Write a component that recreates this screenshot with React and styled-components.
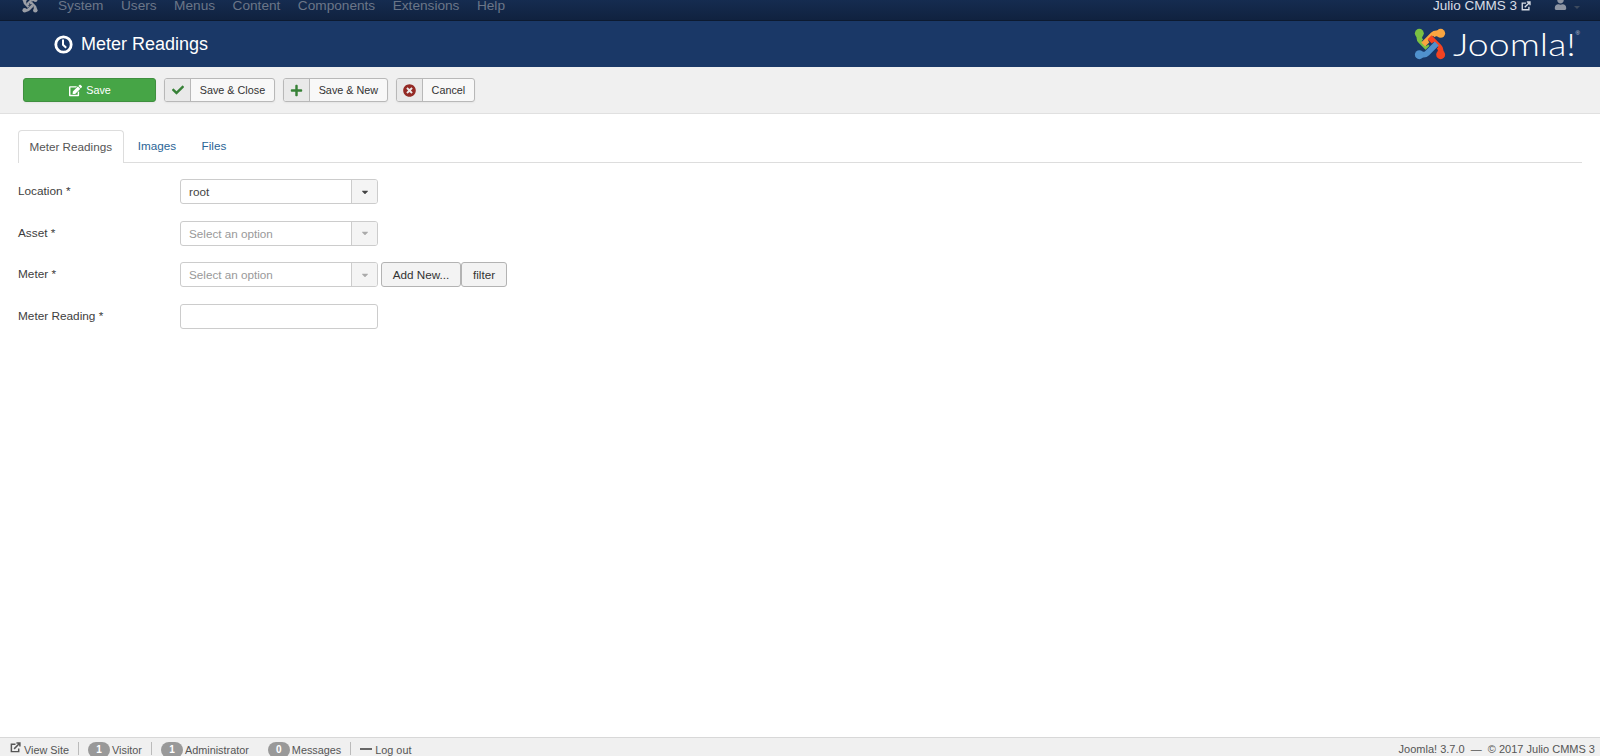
import React from "react";
import styled, { createGlobalStyle } from "styled-components";
import { FaCheck, FaPlus, FaTimesCircle, FaUser, FaEdit, FaCaretDown } from "react-icons/fa";

const GlobalStyle = createGlobalStyle`
  html, body {
    margin: 0;
    padding: 0;
    background: #fff;
    font-family: "Liberation Sans", Arial, sans-serif;
    font-size: 12px;
    color: #333;
  }
`;

const Page = styled.div`
  height: 756px;
  overflow: hidden;
  display: flex;
  flex-direction: column;
`;

const NavBar = styled.nav`
  height: 20px;
  flex: none;
  overflow: hidden;
  display: flex;
  justify-content: space-between;
  background: linear-gradient(#152c50, #10223f);
  border-bottom: 1px solid #0c1a30;
`;

const NavMenu = styled.div`
  display: flex;
  align-items: flex-start;
  padding-left: 22px;
`;

const NavLogo = styled.span`
  width: 16px;
  height: 16px;
  margin: -3px 20px 0 0;
  display: block;
`;

const NavLink = styled.a`
  font-size: 13.65px;
  line-height: 12px;
  color: #6b7688;
  margin-right: 17.5px;
`;

const NavRight = styled.div`
  display: flex;
  align-items: flex-start;
  padding-right: 20px;
`;

const SiteLink = styled.a`
  font-size: 13.5px;
  line-height: 12px;
  color: #d8dde6;
  display: flex;
  align-items: center;
  gap: 4px;
  margin-right: 23px;
`;

const UserIcon = styled.span`
  color: #8d95a3;
  font-size: 13px;
  height: 11px;
  margin-top: -3px;
  margin-right: 7px;
  display: block;
`;

const UserCaret = styled.span`
  width: 0;
  height: 0;
  margin-top: 6px;
  border: 3px solid transparent;
  border-top-color: #3d4a5e;
  border-bottom: 0;
`;

const Header = styled.header`
  height: 46px;
  flex: none;
  display: flex;
  align-items: center;
  justify-content: space-between;
  background: #1a3867;
  padding: 0 27px 0 54px;
`;

const Title = styled.h1`
  margin: 0;
  display: flex;
  align-items: center;
  gap: 8px;
  font-size: 18px;
  font-weight: 400;
  color: #fff;
`;

const Brand = styled.div`
  display: flex;
  align-items: center;
  gap: 7px;
  position: relative;
`;

const BrandName = styled.span`
  width: 120px;
  display: block;
  white-space: nowrap;
  font-family: Lato, sans-serif;
  font-weight: 300;
  font-size: 31px;
  line-height: 34px;
  color: #fff;
  transform: scaleX(1.21);
  transform-origin: left center;
`;

const BrandMark = styled.sup`
  position: absolute;
  right: -7px;
  top: 2px;
  font-size: 6px;
  line-height: 8px;
  color: #c8d0dc;
`;

const Toolbar = styled.div`
  height: 47px;
  flex: none;
  box-sizing: border-box;
  display: flex;
  align-items: flex-start;
  gap: 8px;
  padding: 11px 23px 0;
  background: #f0f0f0;
  border-bottom: 1px solid #e0e0e0;
`;

const SaveButton = styled.button`
  width: 133px;
  height: 24px;
  padding: 0 0 0 1px;
  display: flex;
  align-items: center;
  justify-content: center;
  gap: 4px;
  font: 10.8px "Liberation Sans", Arial, sans-serif;
  color: #fff;
  background: #46a546;
  border: 1px solid #3f8f3f;
  border-radius: 3px;
  box-shadow: 0 1px 2px rgba(0, 0, 0, 0.05);
`;

const ActionButton = styled.button`
  height: 24px;
  padding: 0;
  display: flex;
  align-items: stretch;
  font: 10.8px "Liberation Sans", Arial, sans-serif;
  color: #333;
  background: #f8f8f8;
  border: 1px solid #b8b8b8;
  border-radius: 3px;
  box-shadow: 0 1px 2px rgba(0, 0, 0, 0.05);
`;

const ActionIcon = styled.span`
  width: 25px;
  display: flex;
  align-items: center;
  justify-content: center;
  font-size: ${(p) => p.$size || 12}px;
  color: ${(p) => p.$color};
  background: #e9e9e9;
  border-right: 1px solid #b8b8b8;
  border-radius: 2px 0 0 2px;
`;

const ActionLabel = styled.span`
  display: flex;
  align-items: center;
  padding: 0 8.75px;
`;

const Content = styled.main`
  flex: 1;
  padding: 16px 18px 0;
`;

const TabBar = styled.div`
  width: 1564px;
  height: 32px;
  display: flex;
  border-bottom: 1px solid #ddd;
`;

const Tab = styled.a`
  box-sizing: border-box;
  height: ${(p) => (p.$active ? "33px" : "32px")};
  padding: 0 ${(p) => (p.$active ? "10.5px" : "11.75px")} 2px;
  margin-right: ${(p) => (p.$active ? "1.5px" : "0")};
  display: flex;
  align-items: center;
  font-size: 11.7px;
  color: ${(p) => (p.$active ? "#555" : "#2a6496")};
  background: ${(p) => (p.$active ? "#fff" : "transparent")};
  border: 1px solid ${(p) => (p.$active ? "#ddd" : "transparent")};
  border-bottom: 0;
  border-radius: 4px 4px 0 0;
`;

const Form = styled.div`
  padding-top: 16px;
  display: grid;
  grid-template-columns: 162px 1fr;
  grid-auto-rows: 41.67px;
`;

const Label = styled.label`
  padding-top: 3px;
  font-size: 11.8px;
  line-height: 18px;
  color: #3d3d3d;
`;

const Controls = styled.div`
  display: flex;
  align-items: flex-start;
`;

const Select = styled.div`
  box-sizing: border-box;
  width: 198px;
  height: 25px;
  display: flex;
  background: #fff;
  border: 1px solid #ccc;
  border-radius: 3px;
  overflow: hidden;
`;

const SelectValue = styled.span`
  flex: 1;
  padding-left: 8px;
  line-height: 24px;
  font-size: 11.7px;
  color: ${(p) => (p.$placeholder ? "#999" : "#444")};
`;

const SelectArrow = styled.span`
  width: 25px;
  display: flex;
  align-items: center;
  justify-content: center;
  font-size: 10px;
  color: ${(p) => (p.$muted ? "#aaa" : "#444")};
  background: #f4f4f4;
  border-left: 1px solid #ccc;
`;

const FormButton = styled.button`
  box-sizing: border-box;
  width: ${(p) => p.$width}px;
  height: 25px;
  padding: 0;
  margin-left: ${(p) => p.$gap || 0}px;
  font: 11.7px "Liberation Sans", Arial, sans-serif;
  color: #333;
  background: #f3f3f3;
  border: 1px solid #b3b3b3;
  border-radius: 3px;
`;

const TextInput = styled.input`
  box-sizing: border-box;
  width: 198px;
  height: 25px;
  padding: 0 8px;
  background: #fff;
  border: 1px solid #ccc;
  border-radius: 3px;
`;

const Footer = styled.footer`
  height: 19px;
  flex: none;
  box-sizing: border-box;
  overflow: hidden;
  display: flex;
  justify-content: space-between;
  padding: 0 5px 0 10px;
  background: #f0f0f0;
  border-top: 1px solid #d8d8d8;
  font-size: 11px;
  line-height: 23px;
  color: #555;
`;

const FooterLeft = styled.div`
  display: flex;
  align-items: flex-start;
  font-size: 10.85px;
`;

const FooterItem = styled.span`
  display: flex;
  align-items: flex-start;
  gap: ${(p) => p.$gap ?? 2}px;
  height: 13px;
  margin-top: 4px;
  line-height: 16px;
  padding-right: ${(p) => p.$right ?? 9}px;
  margin-right: ${(p) => p.$after ?? 9}px;
  border-right: ${(p) => (p.$plain ? "0" : "1px solid #bbb")};
`;

const Badge = styled.span`
  width: 22px;
  height: 16px;
  border-radius: 9px;
  background: #999;
  color: #fff;
  font-size: 10px;
  font-weight: 700;
  line-height: 16px;
  text-align: center;
`;

const LogOutDash = styled.span`
  width: 12px;
  height: 2px;
  margin: 6px 3px 0 0;
  background: #666;
`;

const NewTabIcon = ({ color = "currentColor", size = 11 }) => (
  <svg width={size} height={size} viewBox="0 0 12 12" fill="none" stroke={color}>
    <path d="M6 2.500H1.500v8h8V7" strokeWidth="1.600" />
    <path d="M4.500 7.500 10 2M7 1.200h3.800V5" strokeWidth="1.600" />
  </svg>
);

const ClockIcon = () => (
  <svg width="19" height="19" viewBox="0 0 19 19" fill="none" stroke="#fff">
    <circle cx="9.500" cy="9.500" r="7.700" strokeWidth="2.800" />
    <path d="M9 4.500v5.200l3.200 3" strokeWidth="2" />
  </svg>
);

// one hooked arm of the logo, turned four times around the middle
const JoomlaArm = ({ color, angle, outline }) => (
  <g transform={`rotate(${angle} 16 16.5)`}>
    <path d="M5 7v3c0 1.500.5 2.500 1.500 3.500L15.500 22.500" stroke={outline} strokeWidth="7.200" />
    <path d="M5 7v3c0 1.500.5 2.500 1.500 3.500L16.500 23.500" stroke={color} strokeWidth="5.800" />
    <circle cx="5" cy="5.500" r="4.600" fill={color} />
  </g>
);

const JoomlaMark = ({ size = 32, colors, outline }) => (
  <svg width={size} height={size} viewBox="0 0 32 33" fill="none">
    {colors.map((color, idx) => (
      <JoomlaArm key={idx} color={color} angle={idx * 90} outline={outline} />
    ))}
  </svg>
);

const FieldRow = ({ label, children }) => (
  <>
    <Label>{label} *</Label>
    <Controls>{children}</Controls>
  </>
);

const SelectBox = ({ value, placeholder }) => (
  <Select>
    <SelectValue $placeholder={!value}>{value || placeholder}</SelectValue>
    <SelectArrow $muted={!value}>
      <FaCaretDown />
    </SelectArrow>
  </Select>
);

const grey = ["#9a9ea6", "#9a9ea6", "#9a9ea6", "#9a9ea6"];
const brand = ["#7ac143", "#f9a541", "#f44321", "#5091cd"];

const menus = ["System", "Users", "Menus", "Content", "Components", "Extensions", "Help"];

const App = () => {
  return (
    <Page>
      <GlobalStyle />
      <NavBar>
        <NavMenu>
          <NavLogo>
            <JoomlaMark size={16} colors={grey} outline="#14294b" />
          </NavLogo>
          {menus.map((menu) => (
            <NavLink key={menu}>{menu}</NavLink>
          ))}
        </NavMenu>
        <NavRight>
          <SiteLink>
            Julio CMMS 3 <NewTabIcon size={10} />
          </SiteLink>
          <UserIcon>
            <FaUser />
          </UserIcon>
          <UserCaret />
        </NavRight>
      </NavBar>
      <Header>
        <Title>
          <ClockIcon />
          Meter Readings
        </Title>
        <Brand>
          <JoomlaMark colors={brand} outline="#1a3867" />
          <BrandName>Joomla!</BrandName>
          <BrandMark>®</BrandMark>
        </Brand>
      </Header>
      <Toolbar>
        <SaveButton>
          <FaEdit size={13} />
          Save
        </SaveButton>
        <ActionButton>
          <ActionIcon $color="#378137">
            <FaCheck />
          </ActionIcon>
          <ActionLabel>Save &amp; Close</ActionLabel>
        </ActionButton>
        <ActionButton>
          <ActionIcon $color="#378137" $size={13}>
            <FaPlus />
          </ActionIcon>
          <ActionLabel>Save &amp; New</ActionLabel>
        </ActionButton>
        <ActionButton>
          <ActionIcon $color="#942a25" $size={13}>
            <FaTimesCircle />
          </ActionIcon>
          <ActionLabel>Cancel</ActionLabel>
        </ActionButton>
      </Toolbar>
      <Content>
        <TabBar>
          <Tab $active>Meter Readings</Tab>
          <Tab>Images</Tab>
          <Tab>Files</Tab>
        </TabBar>
        <Form>
          <FieldRow label="Location">
            <SelectBox value="root" />
          </FieldRow>
          <FieldRow label="Asset">
            <SelectBox placeholder="Select an option" />
          </FieldRow>
          <FieldRow label="Meter">
            <SelectBox placeholder="Select an option" />
            <FormButton $gap={3} $width={80}>Add New...</FormButton>
            <FormButton $width={46}>filter</FormButton>
          </FieldRow>
          <FieldRow label="Meter Reading">
            <TextInput />
          </FieldRow>
        </Form>
      </Content>
      <Footer>
        <FooterLeft>
          <FooterItem $gap={3}>
            <NewTabIcon />
            View Site
          </FooterItem>
          <FooterItem>
            <Badge>1</Badge>
            Visitor
          </FooterItem>
          <FooterItem $plain $right={0} $after={19}>
            <Badge>1</Badge>
            Administrator
          </FooterItem>
          <FooterItem>
            <Badge>0</Badge>
            Messages
          </FooterItem>
          <FooterItem $plain $gap={0}>
            <LogOutDash />
            Log out
          </FooterItem>
        </FooterLeft>
        <span>Joomla! 3.7.0 &nbsp;— &nbsp;© 2017 Julio CMMS 3</span>
      </Footer>
    </Page>
  );
};

export default App;
